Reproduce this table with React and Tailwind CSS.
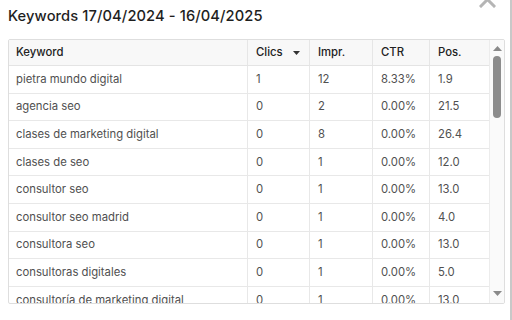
import React from "react";

const rows = [
  ["pietra mundo digital", "1", "12", "8.33%", "1.9"],
  ["agencia seo", "0", "2", "0.00%", "21.5"],
  ["clases de marketing digital", "0", "8", "0.00%", "26.4"],
  ["clases de seo", "0", "1", "0.00%", "12.0"],
  ["consultor seo", "0", "1", "0.00%", "13.0"],
  ["consultor seo madrid", "0", "1", "0.00%", "4.0"],
  ["consultora seo", "0", "1", "0.00%", "13.0"],
  ["consultoras digitales", "0", "1", "0.00%", "5.0"],
  ["consultoría de marketing digital", "0", "1", "0.00%", "13.0"],
  ["consultoría seo", "0", "1", "0.00%", "9.0"],
];

const cols = "grid grid-cols-[239px_62px_63px_57px_60px]";

export default function App() {
  return (
    <div
      className="relative w-[512px] h-[320px] bg-white overflow-hidden"
      style={{ fontFamily: "Inter, 'Noto Sans', sans-serif" }}
    >
      <div className="absolute right-0 top-0 h-full w-[2px] bg-[#c8c8c8]" />
      <svg
        className="absolute left-[479px] top-[-9px]"
        width="17"
        height="17"
        viewBox="0 0 17 17"
      >
        <path d="M2 2 L15 15 M15 2 L2 15" stroke="#b5b5b5" strokeWidth="3" strokeLinecap="square" />
      </svg>
      <div className="pl-[8px] pt-[7px] h-[39px]">
        <h1 className="text-[14.7px] leading-[18px] font-medium text-[#1e1e1e] tracking-[0.1px]">
          Keywords 17/04/2024 - 16/04/2025
        </h1>
      </div>
      <div className="ml-[8px] w-[497px] h-[265px] border border-[#dedede] rounded-[2px] flex overflow-hidden">
        <div className="flex-1 overflow-hidden text-[11.3px]">
          <div className={`${cols} h-[26px] bg-[#f8f8f8] border-b border-[#e4e4e4] text-[#222] font-medium`}>
            <div className="pl-[7px] flex items-center border-r border-[#e6e6e6]">Keyword</div>
            <div className="pl-[8px] pr-[8px] flex items-center justify-between border-r border-[#e6e6e6]">
              <span>Clics</span>
              <svg width="7" height="4" viewBox="0 0 7 4" className="mr-[1px]">
                <path d="M0 0 L7 0 L3.5 4 Z" fill="#333" />
              </svg>
            </div>
            <div className="pl-[8px] flex items-center border-r border-[#e6e6e6]">Impr.</div>
            <div className="pl-[8px] flex items-center border-r border-[#e6e6e6]">CTR</div>
            <div className="pl-[8px] flex items-center">Pos.</div>
          </div>
          {rows.map((r, i) => (
            <div
              key={i}
              className={`${cols} h-[27.6px] border-b border-[#e8e8e8] text-[#505050]`}
            >
              <div className="pl-[7px] flex items-center border-r border-[#e8e8e8] whitespace-nowrap">{r[0]}</div>
              <div className="pl-[8px] flex items-center border-r border-[#e8e8e8]">{r[1]}</div>
              <div className="pl-[8px] flex items-center border-r border-[#e8e8e8]">{r[2]}</div>
              <div className="pl-[8px] flex items-center border-r border-[#e8e8e8]">{r[3]}</div>
              <div className="pl-[8px] flex items-center">{r[4]}</div>
            </div>
          ))}
        </div>
        <div className="w-[15px] border-l border-[#ececec] bg-[#fafafa] flex flex-col items-center">
          <svg width="9" height="5" viewBox="0 0 9 5" className="mt-[6px]">
            <path d="M0 5 L9 5 L4.5 0 Z" fill="#8a8a8a" />
          </svg>
          <div className="mt-[5px] w-[8px] h-[62px] rounded-[4px] bg-[#8c8c8c]" />
          <div className="flex-1" />
          <svg width="9" height="5" viewBox="0 0 9 5" className="mb-[7px]">
            <path d="M0 0 L9 0 L4.5 5 Z" fill="#8a8a8a" />
          </svg>
        </div>
      </div>
    </div>
  );
}
